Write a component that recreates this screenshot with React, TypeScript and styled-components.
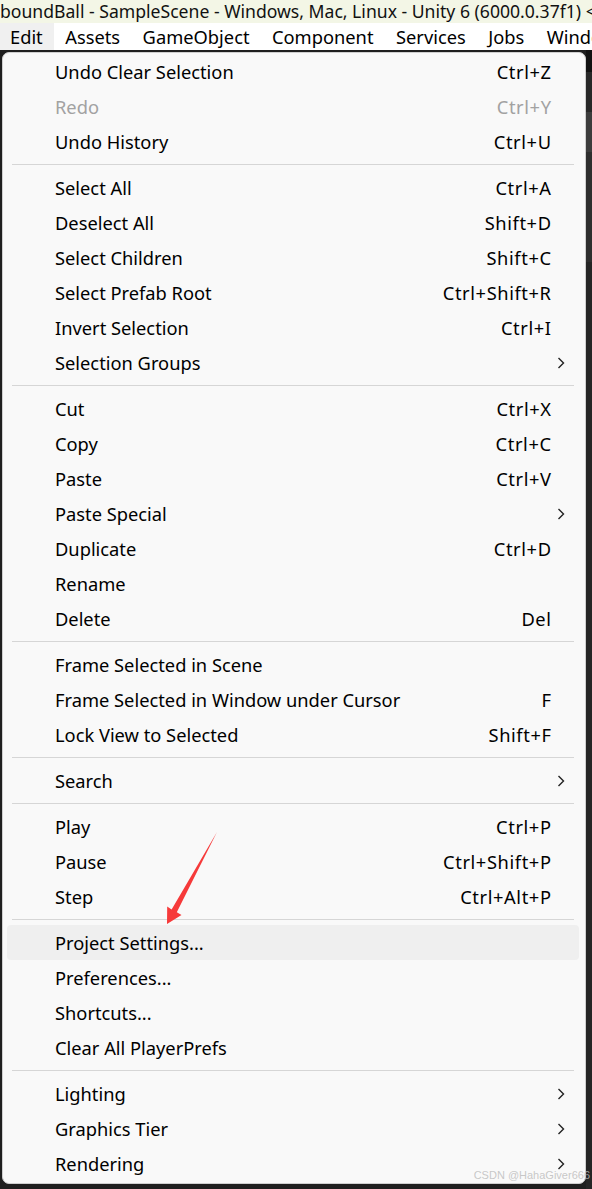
import React from "react";
import styled, { createGlobalStyle } from "styled-components";

const GlobalStyle = createGlobalStyle`
  html, body {
    margin: 0;
    padding: 0;
    background: #2b2b2b;
  }
  body {
    font-family: "Noto Sans", "Open Sans", sans-serif;
    color: #000;
  }
`;

type Item = {
  label: string;
  shortcut?: string;
  submenu?: boolean;
  disabled?: boolean;
  hovered?: boolean;
};

const groups: Item[][] = [
  [
    { label: "Undo Clear Selection", shortcut: "Ctrl+Z" },
    { label: "Redo", shortcut: "Ctrl+Y", disabled: true },
    { label: "Undo History", shortcut: "Ctrl+U" },
  ],
  [
    { label: "Select All", shortcut: "Ctrl+A" },
    { label: "Deselect All", shortcut: "Shift+D" },
    { label: "Select Children", shortcut: "Shift+C" },
    { label: "Select Prefab Root", shortcut: "Ctrl+Shift+R" },
    { label: "Invert Selection", shortcut: "Ctrl+I" },
    { label: "Selection Groups", submenu: true },
  ],
  [
    { label: "Cut", shortcut: "Ctrl+X" },
    { label: "Copy", shortcut: "Ctrl+C" },
    { label: "Paste", shortcut: "Ctrl+V" },
    { label: "Paste Special", submenu: true },
    { label: "Duplicate", shortcut: "Ctrl+D" },
    { label: "Rename" },
    { label: "Delete", shortcut: "Del" },
  ],
  [
    { label: "Frame Selected in Scene" },
    { label: "Frame Selected in Window under Cursor", shortcut: "F" },
    { label: "Lock View to Selected", shortcut: "Shift+F" },
  ],
  [{ label: "Search", submenu: true }],
  [
    { label: "Play", shortcut: "Ctrl+P" },
    { label: "Pause", shortcut: "Ctrl+Shift+P" },
    { label: "Step", shortcut: "Ctrl+Alt+P" },
  ],
  [
    { label: "Project Settings...", hovered: true },
    { label: "Preferences..." },
    { label: "Shortcuts..." },
    { label: "Clear All PlayerPrefs" },
  ],
  [
    { label: "Lighting", submenu: true },
    { label: "Graphics Tier", submenu: true },
    { label: "Rendering", submenu: true },
  ],
];

const menuBarItems = ["Edit", "Assets", "GameObject", "Component", "Services", "Jobs", "Window"];

const Screen = styled.div`
  position: relative;
  width: 592px;
  height: 1189px;
  overflow: hidden;
  background: #2b2b2b;
`;

const TitleBar = styled.div`
  height: 23px;
  line-height: 22px;
  background: #f3f6e6;
  font-size: 17.6px;
  white-space: nowrap;
  overflow: hidden;
  color: #111;
`;

const MenuBar = styled.div`
  height: 27px;
  display: flex;
  align-items: stretch;
  background: #ffffff;
  white-space: nowrap;
  overflow: hidden;
`;

const MenuBarItem = styled.div<{ $active?: boolean }>`
  display: flex;
  align-items: center;
  padding: 0 11px 0 11.5px;
  font-size: 18.3px;
  background: ${(p) => (p.$active ? "#f0f0f0" : "transparent")};

  &:first-child {
    padding-left: 10px;
  }
`;

const Workspace = styled.div`
  display: flex;
  align-items: flex-start;
  height: 1139px;
  background: #1f1f1f;
`;

const DropMenu = styled.div`
  width: 584px;
  margin: 2px 0 0 2px;
  padding: 1px 0 2px;
  background: #f9f9f9;
  border: 1px solid #cfcfcf;
  border-radius: 7px;
  box-sizing: border-box;
`;

const EditorStrip = styled.div`
  flex: 1;
  display: flex;
  flex-direction: column;
  align-self: stretch;
`;

const StripBlock = styled.div<{ $h: number; $c: string }>`
  height: ${(p) => p.$h}px;
  background: ${(p) => p.$c};
`;

const Row = styled.div<{ $hovered?: boolean; $disabled?: boolean }>`
  height: 35px;
  display: flex;
  align-items: center;
  margin: 0 6px 0 4px;
  padding: 0 28px 0 48px;
  border-radius: 4px;
  font-size: 18.3px;
  color: ${(p) => (p.$disabled ? "#a2a2a2" : "#000")};
  background: ${(p) => (p.$hovered ? "#efefef" : "transparent")};
`;

const Label = styled.span`
  flex: 1;
  white-space: nowrap;
`;

const Shortcut = styled.span`
  white-space: nowrap;
  letter-spacing: 0.6px;
  margin-right: -0.6px;
`;

const Chevron = styled.svg`
  width: 10px;
  height: 14px;
  margin-right: -15px;
`;

const Separator = styled.div`
  height: 11px;
  display: flex;
  align-items: center;
  padding: 0 11px 0 9px;

  &::after {
    content: "";
    flex: 1;
    height: 1px;
    background: #d6d6d6;
  }
`;

const Arrow = styled.svg`
  position: absolute;
  left: 0;
  top: 0;
  width: 592px;
  height: 1189px;
  pointer-events: none;
`;

const Watermark = styled.div`
  position: absolute;
  right: 2px;
  bottom: 8px;
  font-family: "Liberation Sans", Arial, sans-serif;
  font-size: 11px;
  color: rgba(190, 190, 190, 0.85);
  white-space: nowrap;
`;

const MenuRow = ({ item }: { item: Item }) => (
  <Row $hovered={item.hovered} $disabled={item.disabled}>
    <Label>{item.label}</Label>
    {item.shortcut && <Shortcut>{item.shortcut}</Shortcut>}
    {item.submenu && (
      <Chevron viewBox="0 0 10 14">
        <path d="M2.5 2 L7.5 7 L2.5 12" fill="none" stroke="#222" strokeWidth="1.4" />
      </Chevron>
    )}
  </Row>
);

export default function App() {
  return (
    <Screen>
      <GlobalStyle />
      <TitleBar>boundBall - SampleScene - Windows, Mac, Linux - Unity 6 (6000.0.37f1) &lt;DX11&gt;</TitleBar>
      <MenuBar>
        {menuBarItems.map((name, i) => (
          <MenuBarItem key={name} $active={i === 0}>
            {name}
          </MenuBarItem>
        ))}
      </MenuBar>
      <Workspace>
        <DropMenu>
          {groups.map((group, gi) => (
            <React.Fragment key={gi}>
              {gi > 0 && <Separator />}
              {group.map((item) => (
                <MenuRow key={item.label} item={item} />
              ))}
            </React.Fragment>
          ))}
        </DropMenu>
        <EditorStrip>
          <StripBlock $h={22} $c="#121212" />
          <StripBlock $h={40} $c="#282828" />
          <StripBlock $h={40} $c="#3c3c3c" />
          <StripBlock $h={110} $c="#2e2e2e" />
          <StripBlock $h={927} $c="#252525" />
        </EditorStrip>
      </Workspace>
      <Arrow viewBox="0 0 592 1189">
        <polygon
          points="217,832 176.8,912.2 181.5,915 167,924 167.2,906.5 171.6,909.4"
          fill="#f63a3a"
        />
      </Arrow>
      <Watermark>CSDN @HahaGiver666</Watermark>
    </Screen>
  );
}
